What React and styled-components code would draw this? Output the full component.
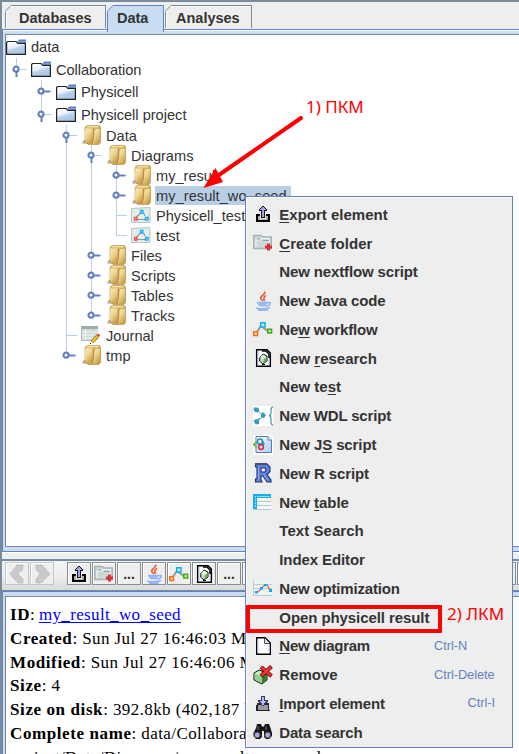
import React from "react";
import styled, { createGlobalStyle } from "styled-components";

const BLUE = "#6382bf";
const STEEL = "#7a8a99";
const PALE = "#c8ddf2";

const Global = createGlobalStyle`
  * { box-sizing: border-box; }
  html, body { margin: 0; padding: 0; overflow: hidden; background: #fff; }
  body { font-family: "Liberation Sans", Arial, sans-serif; color: #333; }
  svg { display: block; flex: none; }
`;

const Window = styled.div`
  position: relative;
  width: 519px;
  height: 754px;
  overflow: hidden;
  display: flex;
  flex-direction: column;
  background: #eee;
  border-left: 2px solid ${STEEL};
`;

/* ---------- tabs ---------- */
const TabBar = styled.div`
  display: flex;
  height: 29px;
  padding: 3px 0 0 3px;
  border-top: 2px solid ${STEEL};
`;
const TabBox = styled.div`
  position: relative;
  z-index: ${(p) => (p.$active ? 1 : 0)};
  width: ${(p) => p.$w}px;
  height: ${(p) => (p.$active ? 27 : 23)}px;
  flex: none;
  margin-right: ${(p) => p.$gap || 0}px;
  padding-left: ${(p) => p.$pad}px;
  background: ${(p) => (p.$active ? PALE : "#eee")};
  border: 1px solid ${(p) => (p.$active ? BLUE : STEEL)};
  border-bottom: 0;
  font-size: 14.5px;
  font-weight: bold;
  line-height: 25px;
  box-shadow: ${(p) => (p.$active ? "none" : "inset 1px 1px 0 #fff")};
`;
const TabCorner = styled.svg`
  position: absolute;
  left: -1px;
  top: -1px;
`;
function Tab({ label, active, w, pad, gap }) {
  return (
    <TabBox $active={active} $w={w} $pad={pad} $gap={gap}>
      <TabCorner width="8" height="8">
        <path d="M0 0H7L0 7Z" fill="#eee" />
        <path d="M0 6.5L6.5 0" stroke={active ? BLUE : STEEL} />
      </TabCorner>
      {label}
    </TabBox>
  );
}

/* ---------- framed panes ---------- */
const Frame = styled.div`
  flex: none;
  height: ${(p) => p.$h}px;
  padding: ${(p) => p.$pad};
  background: ${PALE};
  border: solid ${BLUE};
  border-width: 1px 0 ${(p) => (p.$open ? 0 : 1)}px 1px;
  box-shadow: ${(p) => (p.$open ? "none" : "inset 0 1px 0 #fff")};
`;
const Pane = styled.div`
  height: 100%;
  background: #fff;
  border: solid ${STEEL};
  border-width: 1px 0 ${(p) => (p.$open ? 0 : 1)}px 1px;
  overflow: hidden;
`;

/* ---------- tree ---------- */
const TreeRow = styled.div`
  display: flex;
  align-items: center;
  height: ${(p) => p.$h}px;
  font-size: 14.6px;
  white-space: nowrap;
`;
const TreeIcon = styled.div`
  width: 20px;
  height: 20px;
  flex: none;
  display: flex;
  align-items: center;
  margin-right: 4px;
`;
const TreeLabel = styled.span`
  display: block;
  height: 19px;
  line-height: 21px;
  padding: 0 4px 0 1px;
  letter-spacing: ${(p) => p.$track || 0}px;
  background: ${(p) => (p.$selected ? "#b8cfe5" : "transparent")};
`;

/* Kinds: "" empty, "|" pass-through, "L" last leaf, "T" leaf,
   "o" open, "c" closed; "O" and "C" are the last siblings. */
function Guide({ kind, h }) {
  const m = Math.floor(h / 2);
  const line = { stroke: "#b8cfe5", strokeWidth: 1, shapeRendering: "crispEdges" };
  const last = "LOC".includes(kind);
  const open = kind === "o" || kind === "O";
  const closed = kind === "c" || kind === "C";
  return (
    <svg width="25" height={h}>
      {kind && <path d={`M10.5 0V${last ? m : h}`} {...line} />}
      {kind && kind !== "|" && <path d={`M10 ${m + 0.5}H21`} {...line} />}
      {(open || closed) && (
        <g>
          {open ? (
            <path d={`M10.5 ${m + 2}V${m + 8}`} stroke={BLUE} strokeWidth="2" />
          ) : (
            <path d={`M12 ${m + 0.5}H19`} stroke={BLUE} strokeWidth="2" />
          )}
          <circle cx="10" cy={m + 0.2} r="2.5" fill="#fff" stroke={BLUE} strokeWidth="2.2" />
        </g>
      )}
    </svg>
  );
}

const BlueFolder = () => (
  <svg width="20" height="18" viewBox="0 0 20 18">
    <defs>
      <linearGradient id="bf" x1="0" y1="0" x2=".5" y2="1">
        <stop offset="0" stopColor="#fff" />
        <stop offset=".45" stopColor="#e6eff8" />
        <stop offset=".6" stopColor="#bcd2ea" />
        <stop offset="1" stopColor="#a9c6e6" />
      </linearGradient>
    </defs>
    <path d="M1 5H19V16H1Z" fill="url(#bf)" />
    <path d="M.6 17V4.500L1.500 3.500H10L12 5.500H19.400V16.400H1" fill="none" stroke="#222" strokeWidth="1.200" />
    <path d="M11 4.500L13 1.500H20V5H12Z" fill={BLUE} />
    <path d="M13 3.500H20" stroke="#7f9cd2" />
  </svg>
);
const GoldFolder = () => (
  <svg width="20" height="20" viewBox="0 0 20 20">
    <defs>
      <linearGradient id="gf" x1="0" y1="0" x2=".6" y2="1">
        <stop offset="0" stopColor="#fdf0c4" />
        <stop offset=".55" stopColor="#ecd18a" />
        <stop offset="1" stopColor="#c9a04e" />
      </linearGradient>
      <linearGradient id="gb" x1="0" y1="0" x2="1" y2="1">
        <stop offset="0" stopColor="#e0bf70" />
        <stop offset="1" stopColor="#c79b45" />
      </linearGradient>
    </defs>
    <path d="M.5 17L4 14.500V19H2Z" fill="#c4c4c4" />
    <path d="M4 3Q4.500 .700 6.500 .600H18Q19.500 .800 19.500 2.500V17.500L18 19.500H8L4 17Z" fill="url(#gb)" stroke="#b18a3c" strokeWidth=".6" />
    <path d="M6 1.700H17.500" stroke="#f7e6b0" strokeWidth="1.200" />
    <path d="M4.500 3.500H11.500V12L10.500 18.500H7L3.500 16.500Z" fill="url(#gf)" />
    <path d="M13.500 6L15 4H18.800V18L17.500 19H11.500L13 12Z" fill="url(#gf)" />
    <path d="M12.500 4V12L11 19" fill="none" stroke="#b0843a" strokeWidth=".8" />
    <path d="M3.500 15L4 17.500L8 19.500" fill="none" stroke="#a8803a" strokeWidth=".8" />
  </svg>
);
const DiagramIcon = () => (
  <svg width="20" height="16" viewBox="0 0 20 16">
    <path d="M.5 1.5L19 .5V15.5H.5Z" fill="#e4eded" stroke="#b5c5c5" />
    <path d="M5.500 10L9.500 6M12.500 6L14 9M6 12.500H14" stroke="#8d9595" strokeWidth="1.1" />
    <g fill="#e4eded" strokeWidth="1.3">
      <path d="M9.5 3.5H12V6H9.5Z" stroke="#18aef0" />
      <path d="M14.5 10.5H17V13H14.5Z" stroke="#18aef0" />
      <path d="M3.5 10.5H6V13H3.5Z" stroke="#ef4b4b" />
    </g>
  </svg>
);
const JournalIcon = () => (
  <svg width="20" height="20" viewBox="0 0 20 20">
    <path d="M0 1H17V15H0Z" fill="#d0dad9" />
    <path d="M0 1H17V4H0Z" fill="#9cadab" />
    <path d="M1 7H16M1 10H16M1 13H12M4.5 4V15" stroke="#f2f6f6" />
    <path d="M.5 1V15.5H11" fill="none" stroke="#aebbb9" />
    <path d="M11 17L17 10.5" stroke="#8a6a12" strokeWidth="3.4" />
    <path d="M11 17L17 10.5" stroke="#f7c51d" strokeWidth="2.2" />
    <path d="M16.5 11L18.5 9.5" stroke="#e34040" strokeWidth="2.6" />
    <path d="M9 18H10V19H9Z" fill="#222" />
  </svg>
);

const treeIcons = { blue: BlueFolder, gold: GoldFolder, diagram: DiagramIcon, journal: JournalIcon };
const treeRows = [
  { t: "data", i: "blue", g: [], h: 23 },
  { t: "Collaboration", i: "blue", g: ["O"], h: 22, k: -0.05 },
  { t: "Physicell", i: "blue", g: ["", "c"], h: 23 },
  { t: "Physicell project", i: "blue", g: ["", "O"], h: 22 },
  { t: "Data", i: "gold", g: ["", "", "o"] },
  { t: "Diagrams", i: "gold", g: ["", "", "|", "o"] },
  { t: "my_result", i: "gold", g: ["", "", "|", "|", "c"] },
  { t: "my_result_wo_seed", i: "gold", g: ["", "", "|", "|", "c"], sel: true, k: 0.05 },
  { t: "Physicell_test", i: "diagram", g: ["", "", "|", "|", "T"] },
  { t: "test", i: "diagram", g: ["", "", "|", "|", "L"], k: 0.1 },
  { t: "Files", i: "gold", g: ["", "", "|", "c"] },
  { t: "Scripts", i: "gold", g: ["", "", "|", "c"] },
  { t: "Tables", i: "gold", g: ["", "", "|", "c"], k: 0.05 },
  { t: "Tracks", i: "gold", g: ["", "", "|", "C"], k: 0.1 },
  { t: "Journal", i: "journal", g: ["", "", "T"] },
  { t: "tmp", i: "gold", g: ["", "", "C"], k: 0.1 },
];

function Tree() {
  return treeRows.map(({ t, i, g, h = 20, sel, k }) => {
    const Icon = treeIcons[i];
    return (
      <TreeRow key={t} $h={h}>
        {g.map((kind, n) => (
          <Guide key={n} kind={kind} h={h} />
        ))}
        <TreeIcon><Icon /></TreeIcon>
        <TreeLabel $selected={sel} $track={k}>{t}</TreeLabel>
      </TreeRow>
    );
  });
}

/* ---------- action icons ---------- */
const ExportIcon = () => (
  <svg width="20" height="20" viewBox="0 0 20 20" shapeRendering="crispEdges">
    <path d="M3 10H7V12H5V16H15V12H13V10H17V18H3Z" fill="#000" />
    <path d="M5 12H7V15H13V12H15V16H5Z" fill="#aaa" />
    <path d="M9 2H11V3H12V4H13V5H14V7H12V14H8V7H6V5H7V4H8V3H9Z" fill="#111" />
    <path d="M9 3H11V4H12V5H13V6H11V13H9V6H7V5H8V4H9Z" fill="#a3a3ee" />
  </svg>
);
const ImportIcon = () => (
  <svg width="20" height="20" viewBox="0 0 20 20" shapeRendering="crispEdges">
    <path d="M4 10H16V17H17V18H3V12H4Z" fill="#222" />
    <path d="M5 12H15V17H5Z" fill="#9b9b9b" />
    <path d="M8 3H12V7H15V9H14V10H13V11H12V12H11V13H9V12H8V11H7V10H6V9H5V7H8Z" fill="#333b60" />
    <path d="M9 4H11V8H13V9H12V10H11V12H9V10H8V9H7V8H9Z" fill="#b8b8ff" />
  </svg>
);
const CreateFolderIcon = () => (
  <svg width="20" height="20" viewBox="0 0 20 20">
    <path d="M.7 2.500H8L10 4H18.300V15.500H.7Z" fill="#ccd8d8" stroke="#a3b4b4" strokeWidth="1.400" />
    <path d="M3 14V7H7L9 5.500H16V12" fill="none" stroke="#f1f6f6" strokeWidth="1.200" />
    <path d="M4 6H7M10 7.500H16" stroke="#91a3a3" />
    <path d="M15.5 10.500V17.500M12 14H19" stroke="#df2e38" strokeWidth="3" />
  </svg>
);
const JavaIcon = () => (
  <svg width="20" height="20" viewBox="0 0 20 20" fill="none">
    <path d="M12 .5Q12 3 9.5 4.5T8 8L10 10M13 4.5Q10.5 6 11 7.5T11 10" stroke="#e7653c" strokeWidth="1.7" />
    <path d="M4 11.5H14L13 15H6Z" fill="#9bbcf5" />
    <path d="M4 11.5H14.5M6 14.5H13M14 12Q18 10.5 17 13T13 14.5M3 17Q9 19 17 16.5M5 19Q11 20 15 18.8" stroke="#8fb2f5" strokeWidth="1.6" />
  </svg>
);
const WorkflowIcon = () => (
  <svg width="20" height="20" viewBox="0 0 20 20">
    <path d="M3 14L8 7L16 13" fill="none" stroke="#919999" strokeWidth="2" />
    <g strokeWidth="1.5">
      <path d="M7.7 3.7H12V8H7.7Z" fill="#bdefff" stroke="#13afe9" />
      <path d="M.8 12.8H4.5V16.5H.8Z" fill="#ffe2ce" stroke="#ff6d0b" />
      <path d="M14.8 10.2H18.6V14H14.8Z" fill="#c6efac" stroke="#43ab14" />
    </g>
  </svg>
);
const ResearchIcon = () => (
  <svg width="20" height="20" viewBox="0 0 20 20">
    <path d="M3.700 1.700H14L17.300 5V18.300H3.700Z" fill="#fff" stroke="#000" strokeWidth="1.500" />
    <path d="M5 17.500V3M16 17V11" stroke="#b9b9ff" />
    <path d="M9 3H13L16 6V10" fill="none" stroke="#000" strokeWidth="1.5" />
    <path d="M7 9L10 6L14 8V13L10 16L6.5 13Z" fill="#bfe6b2" stroke="#111" />
    <path d="M10 6.5L13 9L10 11L7 9Z" fill="#efffeb" />
    <path d="M11 11L13.5 9V13L10 15.5" fill="#69aa63" />
    <path d="M9 16H12V17H9Z" fill="#111" />
  </svg>
);
const WdlIcon = () => (
  <svg width="20" height="20" viewBox="0 0 20 20">
    <path d="M0 0H20V20H0Z" fill="#fff" />
    <path d="M4 4L10 9.5L4 16" fill="none" stroke="#68a9c0" />
    <path
      d="M1 1.500H5L6.500 4L5 6.500L2 6L.5 4ZM.5 14.500L3 13L6 15V18L2.500 18.500ZM8 8L10 6L13 9L11 12L8 11.500ZM7.500 11.500L5.500 15L3 14Z"
      fill="#3c9ab9"
    />
    <path d="M20 1Q18 1 18 4V7Q18 9 16 9.5Q18 10 18 12V16Q18 19 20 19" fill="none" stroke="#4aa3bd" strokeWidth="1.3" />
  </svg>
);
const JsIcon = () => (
  <svg width="20" height="20" viewBox="0 0 20 20">
    <defs>
      <linearGradient id="js" x1="0" y1="0" x2="1" y2="1">
        <stop offset="0" stopColor="#fff" />
        <stop offset="1" stopColor="#a9cdf5" />
      </linearGradient>
    </defs>
    <path d="M0 0H20V20H0Z" fill="#fff" />
    <path d="M3 1.5H15L18.5 5V17.5H3Z" fill="url(#js)" stroke="#557ab2" />
    <path d="M15 1.5V5H18.5" fill="#fff" stroke="#557ab2" />
    <circle cx="7" cy="6.5" r="2.6" fill="#dff6ff" stroke="#258ebd" strokeWidth="1.5" />
    <circle cx="8" cy="12" r="2.4" fill="#ffe4e4" stroke="#d9303c" strokeWidth="1.6" />
    <path d="M3.5 7L.8 9.5L3.5 12" fill="none" stroke="#61b52c" strokeWidth="1.7" />
    <path d="M9 6L11 9L9 11" fill="none" stroke="#258ebd" strokeWidth="1.5" />
  </svg>
);
const RIcon = () => (
  <svg width="20" height="20" viewBox="0 0 20 20">
    <path
      fillRule="evenodd"
      d="M2.500 1H14L17 4V8.500L14 11.500L18 17V19H14L10 13H8V17L9 19H2.500V16H4V4H2.500ZM8 5V9H12L13 7L12 5Z"
      fill="#5b84dc"
      stroke="#242e72"
      strokeWidth="1.1"
    />
    <path d="M2 1H14" stroke="#47506b" strokeWidth="2" />
    <path d="M5.5 4V17M11 12L14.500 17.500" stroke="#8fb2f5" />
  </svg>
);
const TableIcon = () => (
  <svg width="20" height="20" viewBox="0 0 20 20" shapeRendering="crispEdges">
    <path d="M0 3H18V17H0Z" fill="#f4f8f8" />
    <path d="M4 9.5H18M4 13.5H18M0 17.5H18" stroke="#b9caca" />
    <path d="M0 2H18V6H4V17H0Z" fill="#16aeee" />
    <path d="M4 4.500H17" stroke="#8bdcff" />
    <path d="M2.5 4V16" stroke="#8bdcff" strokeDasharray="2 1" />
  </svg>
);
const OptimizationIcon = () => (
  <svg width="20" height="20" viewBox="0 0 20 20">
    <path d="M.5 2.5H19V17H.5Z" fill="#edf3f3" />
    <path d="M1 6.5H19M1 10.5H19M.5 2V17.5H19" fill="none" stroke="#bdcccc" />
    <path d="M2 14L6 13L10 8.5L14 7L17 12" fill="none" stroke="#e34d45" strokeWidth="1.2" />
    <path d="M2 13H5V15.500H2ZM7 9H10V11.500H7ZM11 6H14V8H11ZM16 11H19V14H16Z" fill="#16a9ed" />
  </svg>
);
const PageIcon = () => (
  <svg width="20" height="20" viewBox="0 0 20 20">
    <path d="M3.700 1.700H12L17.300 7V18.300H3.700Z" fill="#fff" stroke="#000" strokeWidth="1.400" />
    <path d="M5 17V3M16 17V8" stroke="#c6c6ff" />
    <path d="M11.500 2V7.500H17" fill="#d8d8ff" stroke="#555" />
  </svg>
);
const RemoveIcon = () => (
  <svg width="20" height="20" viewBox="0 0 20 20">
    <path d="M1 8L6 5L14 8V15L9 19L1 15Z" fill="#c6edc2" stroke="#111" />
    <path d="M9 11L14 8V15L9 18.500Z" fill="#397b39" />
    <path d="M1.500 9L9 11V18L2 15Z" fill="#8fd08c" />
    <path d="M8 2L18.500 11M18.500 1.500L8 11" stroke="#5d0808" strokeWidth="4" />
    <path d="M8.500 2.500L18 10.500M18 2L8.500 10.500" stroke="#f33431" strokeWidth="2.500" />
  </svg>
);
const BinocularsIcon = () => (
  <svg width="20" height="20" viewBox="0 0 20 20">
    <path d="M4 2H8L9 4.500H11L12 2H16L17.500 6L19 11V14L16 17H13L11 15V9H9V15L7 17H3L.5 14V11L3 6Z" fill="#151515" />
    <circle cx="4.200" cy="13" r="2.900" fill="#a7a9d8" stroke="#444" />
    <circle cx="14.700" cy="13" r="2.900" fill="#a7a9d8" stroke="#444" />
    <path d="M5 4V8M13 4V8" stroke="#777" />
  </svg>
);
const ArrowIcon = ({ right }) => (
  <svg width="20" height="20" viewBox="0 0 20 20">
    <path
      d={right ? "M4 1H10L18 10L9 19H4V15L8 10L4 5Z" : "M16 1H10L3 10L11 19H16V15L11 10L16 5Z"}
      fill="#c9c9c9"
      stroke="#aaa"
      strokeDasharray="1 1"
    />
  </svg>
);

/* ---------- toolbar ---------- */
const Splitter = styled.div`
  flex: none;
  height: 7px;
  background: #eee;
  border-top: 1px solid #fff;
`;
const Toolbar = styled.div`
  flex: none;
  display: flex;
  gap: 1px;
  height: 32px;
  padding: 1px 0 0 3px;
  border: solid ${STEEL};
  border-width: 2px 0 1px;
  background: linear-gradient(#f4f4f4, #eee 50%, #dadada);
`;
const ToolButton = styled.div`
  flex: none;
  width: 24px;
  height: 23px;
  margin-right: ${(p) => p.$gap || 0}px;
  display: flex;
  align-items: center;
  justify-content: center;
  border: 1px solid ${(p) => (p.$disabled ? "#c5c5c5" : "#8c8c8c")};
  box-shadow: inset 1px 1px 0 #fff;
  background: #eee;
  font-size: 14px;
  font-weight: bold;
`;

/* ---------- details ---------- */
const Details = styled.div`
  padding: 6px 0 0 4px;
  font-family: "Liberation Serif", "Times New Roman", serif;
  font-size: 17px;
  color: #000;
  letter-spacing: 0.4px;
  white-space: nowrap;
`;
const DetailLine = styled.div`
  height: 23.8px;
  line-height: 23.8px;
`;
const Key = styled.b`
  letter-spacing: 0.6px;
`;
const Link = styled.span`
  color: #00f;
  text-decoration: underline;
  text-underline-offset: 2px;
  letter-spacing: 0.36px;
  margin-left: -1px;
`;

/* ---------- context menu ---------- */
const Menu = styled.div`
  position: absolute;
  left: 243px;
  top: 196px;
  width: 268px;
  height: 552px;
  padding-top: 3px;
  background: #eee;
  border: 1px solid ${BLUE};
  box-shadow: inset 1px 1px 0 #fff;
`;
const MenuItem = styled.div`
  display: flex;
  align-items: center;
  height: 28.780px;
  padding: 0 17px 0 7px;
`;
const MenuIcon = styled.div`
  width: 20px;
  flex: none;
  margin-right: 6.300px;
`;
const MenuLabel = styled.span`
  flex: 1;
  font-size: 15px;
  font-weight: bold;
  white-space: nowrap;
  letter-spacing: ${(p) => p.$track || 0}px;
`;
const Mnemonic = styled.span`
  text-decoration: underline;
  text-decoration-thickness: 1px;
  text-underline-offset: 2px;
`;
const Shortcut = styled.span`
  width: 61px;
  font-size: 12.700px;
  color: ${BLUE};
  text-align: ${(p) => p.$align || "left"};
  white-space: nowrap;
`;

/* An underscore precedes the mnemonic letter. */
const menuItems = [
  ["_Export element", ExportIcon, 0],
  ["_Create folder", CreateFolderIcon, 0.05],
  ["New nextflow script", null, -0.13],
  ["New Java code", JavaIcon, -0.1],
  ["Ne_w workflow", WorkflowIcon, -0.15],
  ["New _research", ResearchIcon, 0],
  ["New te_st", null, 0],
  ["New WDL script", WdlIcon, -0.15],
  ["New J_S script", JsIcon, -0.1],
  ["New R script", RIcon, -0.1],
  ["New _table", TableIcon, -0.05],
  ["Text Search", null, 0.05],
  ["Index Editor", null, -0.1],
  ["New optimization", OptimizationIcon, -0.18],
  ["Open physicell result", null, -0.08],
  ["_New diagram", PageIcon, -0.25],
  ["Remove", RemoveIcon, 0, "Ctrl-Delete"],
  ["_Import element", ImportIcon, -0.14, "Ctrl-I", "right"],
  ["Data search", BinocularsIcon, -0.18],
];
menuItems[15].push("Ctrl-N");

function Caption({ text }) {
  const at = text.indexOf("_");
  if (at < 0) return text;
  return (
    <>
      {text.slice(0, at)}
      <Mnemonic>{text[at + 1]}</Mnemonic>
      {text.slice(at + 2)}
    </>
  );
}

/* ---------- annotations ---------- */
const Note = styled.div`
  position: absolute;
  left: ${(p) => p.$x}px;
  top: ${(p) => p.$y}px;
  font: 400 17px/24px "Noto Sans", "Open Sans", sans-serif;
  color: #f00;
  white-space: nowrap;
`;
const Highlight = styled.div`
  position: absolute;
  left: 244px;
  top: 605px;
  width: 196px;
  height: 28px;
  border: 4px solid #f00;
  border-radius: 1px;
`;
const Pointer = styled.svg`
  position: absolute;
  left: 198px;
  top: 110px;
`;

export default function App() {
  return (
    <Window>
      <Global />
      <TabBar>
        <Tab label="Databases" w={101} pad={13} gap={1} />
        <Tab label="Data" w={57} pad={9} gap={1} active />
        <Tab label="Analyses" w={87} pad={10} />
      </TabBar>
      <Frame $h={523} $pad="4px 0 4px 2px">
        <Pane>
          <Tree />
        </Pane>
      </Frame>
      <Splitter />
      <Toolbar>
        <ToolButton $disabled><ArrowIcon /></ToolButton>
        <ToolButton $disabled $gap={12}><ArrowIcon right /></ToolButton>
        <ToolButton><ExportIcon /></ToolButton>
        <ToolButton><CreateFolderIcon /></ToolButton>
        <ToolButton>...</ToolButton>
        <ToolButton><JavaIcon /></ToolButton>
        <ToolButton><WorkflowIcon /></ToolButton>
        <ToolButton><ResearchIcon /></ToolButton>
        <ToolButton>...</ToolButton>
        {Array.from({ length: 12 }, (_, n) => (
          <ToolButton key={n} />
        ))}
      </Toolbar>
      <Frame $h={163} $pad="4px 0 0 2px" $open>
        <Pane $open>
          <Details>
            <DetailLine><Key>ID</Key>: <Link>my_result_wo_seed</Link></DetailLine>
            <DetailLine><Key>Created</Key>: Sun Jul 27 16:46:03 MSK 2025</DetailLine>
            <DetailLine><Key>Modified</Key>: Sun Jul 27 16:46:06 MSK 2025</DetailLine>
            <DetailLine><Key>Size</Key>: 4</DetailLine>
            <DetailLine><Key>Size on disk</Key>: 392.8kb (402,187 bytes)</DetailLine>
            <DetailLine><Key>Complete name</Key>: data/Collaboration/Physicell</DetailLine>
            <DetailLine>project/Data/Diagrams/my_result_wo_seed</DetailLine>
          </Details>
        </Pane>
      </Frame>
      <Menu>
        {menuItems.map(([text, Icon, track, keys, align]) => (
          <MenuItem key={text}>
            <MenuIcon>{Icon && <Icon />}</MenuIcon>
            <MenuLabel $track={track}><Caption text={text} /></MenuLabel>
            {keys && <Shortcut $align={align}>{keys}</Shortcut>}
          </MenuItem>
        ))}
      </Menu>
      <Highlight />
      <Note $x={304} $y={95}>1) ПКМ</Note>
      <Note $x={445} $y={602}>2) ЛКМ</Note>
      <Pointer width="110" height="84">
        <path d="M101 8L16 67" stroke="#f00" strokeWidth="4" strokeLinecap="round" />
        <path d="M3.500 78L15.500 58L23 72Z" fill="#f00" />
      </Pointer>
    </Window>
  );
}
